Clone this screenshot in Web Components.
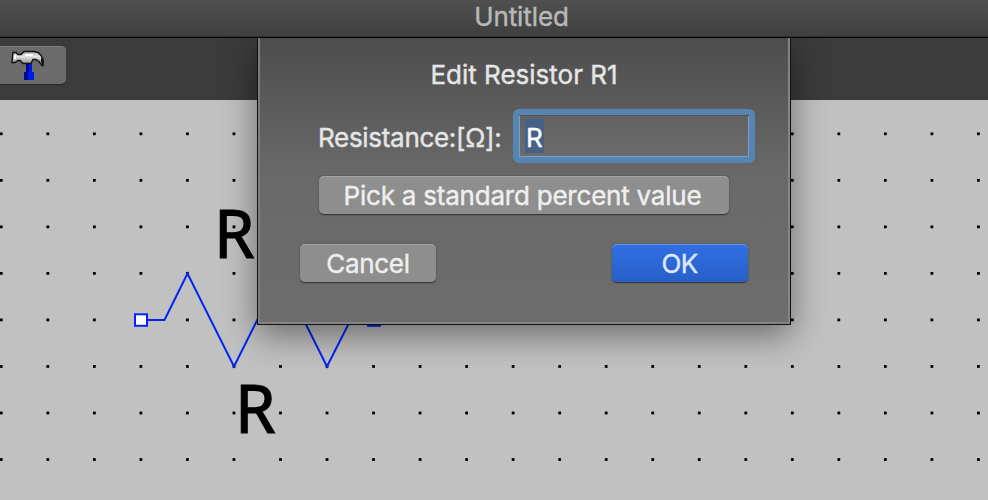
<!DOCTYPE html>
<html lang="en">
<head>
<meta charset="utf-8">
<title>Untitled</title>
<style>
  body {
    margin: 0;
    width: 988px;
    height: 500px;
    overflow: hidden;
    font-family: Inter, "Liberation Sans", sans-serif;
    font-size: 26px;
    color: #e6e6e6;
    -webkit-text-stroke: 0.4px;
  }
</style>
</head>
<body>
<circuit-window>
  <title-bar slot="title">Untitled</title-bar>
  <tool-bar slot="tools"></tool-bar>
  <schematic-canvas></schematic-canvas>
  <edit-sheet slot="sheet">
    <span slot="heading">Edit Resistor R1</span>
    <value-field label="Resistance:[Ω]:" value="R"></value-field>
    <push-button class="pick" style="letter-spacing: -0.22px; text-indent: -3px">Pick a standard percent value</push-button>
    <push-button slot="actions" style="letter-spacing: -0.3px">Cancel</push-button>
    <push-button slot="actions" primary style="letter-spacing: -0.6px; text-indent: -1px">OK</push-button>
  </edit-sheet>
</circuit-window>

<script>
class CircuitWindow extends HTMLElement {
  constructor() {
    super();
    this.attachShadow({ mode: 'open' }).innerHTML = `
      <style>
        :host {
          position: relative;
          display: flex;
          flex-direction: column;
          height: 500px;
          overflow: hidden;
        }
      </style>
      <slot name="title"></slot>
      <slot name="tools"></slot>
      <slot></slot>
      <slot name="sheet"></slot>
    `;
  }
}

class TitleBar extends HTMLElement {
  constructor() {
    super();
    this.attachShadow({ mode: 'open' }).innerHTML = `
      <style>
        :host {
          display: flex;
          justify-content: center;
          box-sizing: border-box;
          height: 38px;
          padding-left: 55px;
          line-height: 34px;
          letter-spacing: -0.1px;
          color: #b9b9b9;
          background: linear-gradient(#505050, #3f3f3f);
          border-bottom: 1px solid #000;
          box-shadow: inset 0 -1px #333;
        }
      </style>
      <slot></slot>
    `;
  }
}

class ToolBar extends HTMLElement {
  constructor() {
    super();
    this.attachShadow({ mode: 'open' }).innerHTML = `
      <style>
        :host {
          display: flex;
          box-sizing: border-box;
          height: 62px;
          padding-top: 8px;
          background: #3b3b3b;
        }

        .tool {
          width: 66px;
          height: 38px;
          border-radius: 0 5px 5px 0;
          background: #6b6b6b;
          box-shadow: inset 0 1px #7d7d7d, 0 1px 1px #2a2a2a;
        }

        svg {
          display: block;
        }
      </style>
      <div class="tool">
        <svg width="66" height="38" viewBox="0 46 66 38">
          <defs>
            <linearGradient id="head" x1="0" y1="0" x2="0" y2="1">
              <stop offset="0" stop-color="#aaa"/>
              <stop offset=".35" stop-color="#e4e4e4"/>
              <stop offset=".6" stop-color="#bbb"/>
              <stop offset="1" stop-color="#777"/>
            </linearGradient>
          </defs>
          <path d="M26 63h6v9h2v8H24v-8h2z" fill="#0018e8"/>
          <path d="M26 63h3v9h-1v8h-4v-8h2z" fill="#000a91"/>
          <path d="M13 52.5h3l2 2h3l3-3h10l4 1 3 3 2 4v6h-1l-3-4-3-2h-3l-2 4h-8l-3-3h-2l-3 2h-3z"
            fill="url(#head)" stroke="#111" stroke-width="1.4"/>
          <path d="M41 58l2.5 2v6l-2.5-4z" fill="#111"/>
          <path d="M15 55v4M25 55h8" stroke="#fff" stroke-width="2"/>
        </svg>
      </div>
    `;
  }
}

class SchematicCanvas extends HTMLElement {
  constructor() {
    super();
    const step = 46.53;
    let dots = '';
    for (let row = 0; row < 8; row++) {
      for (let col = 0; col < 22; col++) {
        const x = (1.3 + col * step - 1.4).toFixed(2);
        const y = (133.8 + row * step - 1.4).toFixed(2);
        dots += `<rect x="${x}" y="${y}" width="2.8" height="2.8"/>`;
      }
    }
    this.attachShadow({ mode: 'open' }).innerHTML = `
      <style>
        :host {
          display: block;
          height: 400px;
          background: #c1c1c1;
        }

        svg {
          display: block;
        }

        text {
          font: 68px "Noto Sans", "Open Sans", sans-serif;
          stroke: #000;
          stroke-width: 1.2px;
          -webkit-text-stroke: 1.2px #000;
        }
      </style>
      <svg width="988" height="400" viewBox="0 100 988 400">
        <g>${dots}</g>
        <g fill="none" stroke="#0026f5" stroke-width="2">
          <path d="M141 320H164.5L187.5 273.5L234 366.5L280.5 273.5L327 366.5L350.5 320H374"/>
          <rect x="135" y="314.3" width="12" height="11.5" fill="#fff"/>
          <rect x="368" y="314.3" width="12" height="11.5" fill="#fff"/>
        </g>
        <text transform="translate(214 257.5) scale(.96 1)">R</text>
        <text transform="translate(235 432.5) scale(.96 1)">R</text>
      </svg>
    `;
  }
}

class EditSheet extends HTMLElement {
  constructor() {
    super();
    this.attachShadow({ mode: 'open' }).innerHTML = `
      <style>
        :host {
          position: absolute;
          left: 257px;
          top: 38px;
          display: flex;
          flex-direction: column;
          box-sizing: border-box;
          width: 534px;
          height: 287px;
          border: solid #111;
          border-width: 0 1px 1px;
          background: linear-gradient(#4d4d4d, #696969 48%, #6d6d6d);
          box-shadow: inset 2px 0 #7d7d7d, inset -2px -2px #858585, 0 10px 32px rgba(0, 0, 0, 0.45);
          clip-path: inset(0 -60px -60px -60px);
        }

        .heading {
          margin-top: 20px;
          height: 34px;
          line-height: 34px;
          text-align: center;
          letter-spacing: 0;
        }

        ::slotted(value-field) {
          margin: 17px 0 0 60px;
        }

        ::slotted(.pick) {
          width: 410px;
          margin: 13px 0 0 61px;
        }

        .actions {
          display: flex;
          justify-content: space-between;
          margin: 30px 42px 0 42px;
        }

        .actions ::slotted(push-button) {
          width: 136px;
        }
      </style>
      <div class="heading"><slot name="heading"></slot></div>
      <slot></slot>
      <div class="actions"><slot name="actions"></slot></div>
    `;
  }
}

class ValueField extends HTMLElement {
  constructor() {
    super();
    this.attachShadow({ mode: 'open' });
  }

  connectedCallback() {
    this.shadowRoot.innerHTML = `
      <style>
        :host {
          display: flex;
          align-items: center;
          height: 54px;
        }

        .label {
          width: 195px;
          padding-top: 4px;
          line-height: 34px;
          letter-spacing: -0.3px;
          white-space: nowrap;
        }

        .box {
          display: flex;
          align-items: center;
          box-sizing: border-box;
          width: 242px;
          height: 54px;
          padding-left: 6px;
          border: 6px solid #5585b0;
          border-radius: 6px;
          background: linear-gradient(#626262, #6b6b6b);
          box-shadow: inset 0 1px #555, inset -1px -1px #78a0c2, inset 1px 0 #78a0c2;
        }

        .selected {
          padding: 0 1px;
          height: 34px;
          line-height: 37px;
          color: #fff;
          background: #466188;
        }
      </style>
      <span class="label">${this.getAttribute('label')}</span>
      <div class="box"><span class="selected">${this.getAttribute('value')}</span></div>
    `;
  }
}

class PushButton extends HTMLElement {
  constructor() {
    super();
    this.attachShadow({ mode: 'open' }).innerHTML = `
      <style>
        :host {
          display: block;
          height: 38px;
          line-height: 39px;
          text-align: center;
          white-space: nowrap;
          color: #efefef;
          border-radius: 5px;
          background: #8e8e8e;
          box-shadow: inset 0 1px #a3a3a3, 0 0.5px 1.5px rgba(0, 0, 0, 0.55);
        }

        :host([primary]) {
          color: #dfe8fa;
          background: linear-gradient(#306fe2, #275fc9);
          box-shadow: inset 0 1px #6592e5, 0 0.5px 1.5px rgba(0, 0, 0, 0.55);
        }
      </style>
      <slot></slot>
    `;
  }
}

customElements.define('circuit-window', CircuitWindow);
customElements.define('title-bar', TitleBar);
customElements.define('tool-bar', ToolBar);
customElements.define('schematic-canvas', SchematicCanvas);
customElements.define('edit-sheet', EditSheet);
customElements.define('value-field', ValueField);
customElements.define('push-button', PushButton);
</script>
</body>
</html>
